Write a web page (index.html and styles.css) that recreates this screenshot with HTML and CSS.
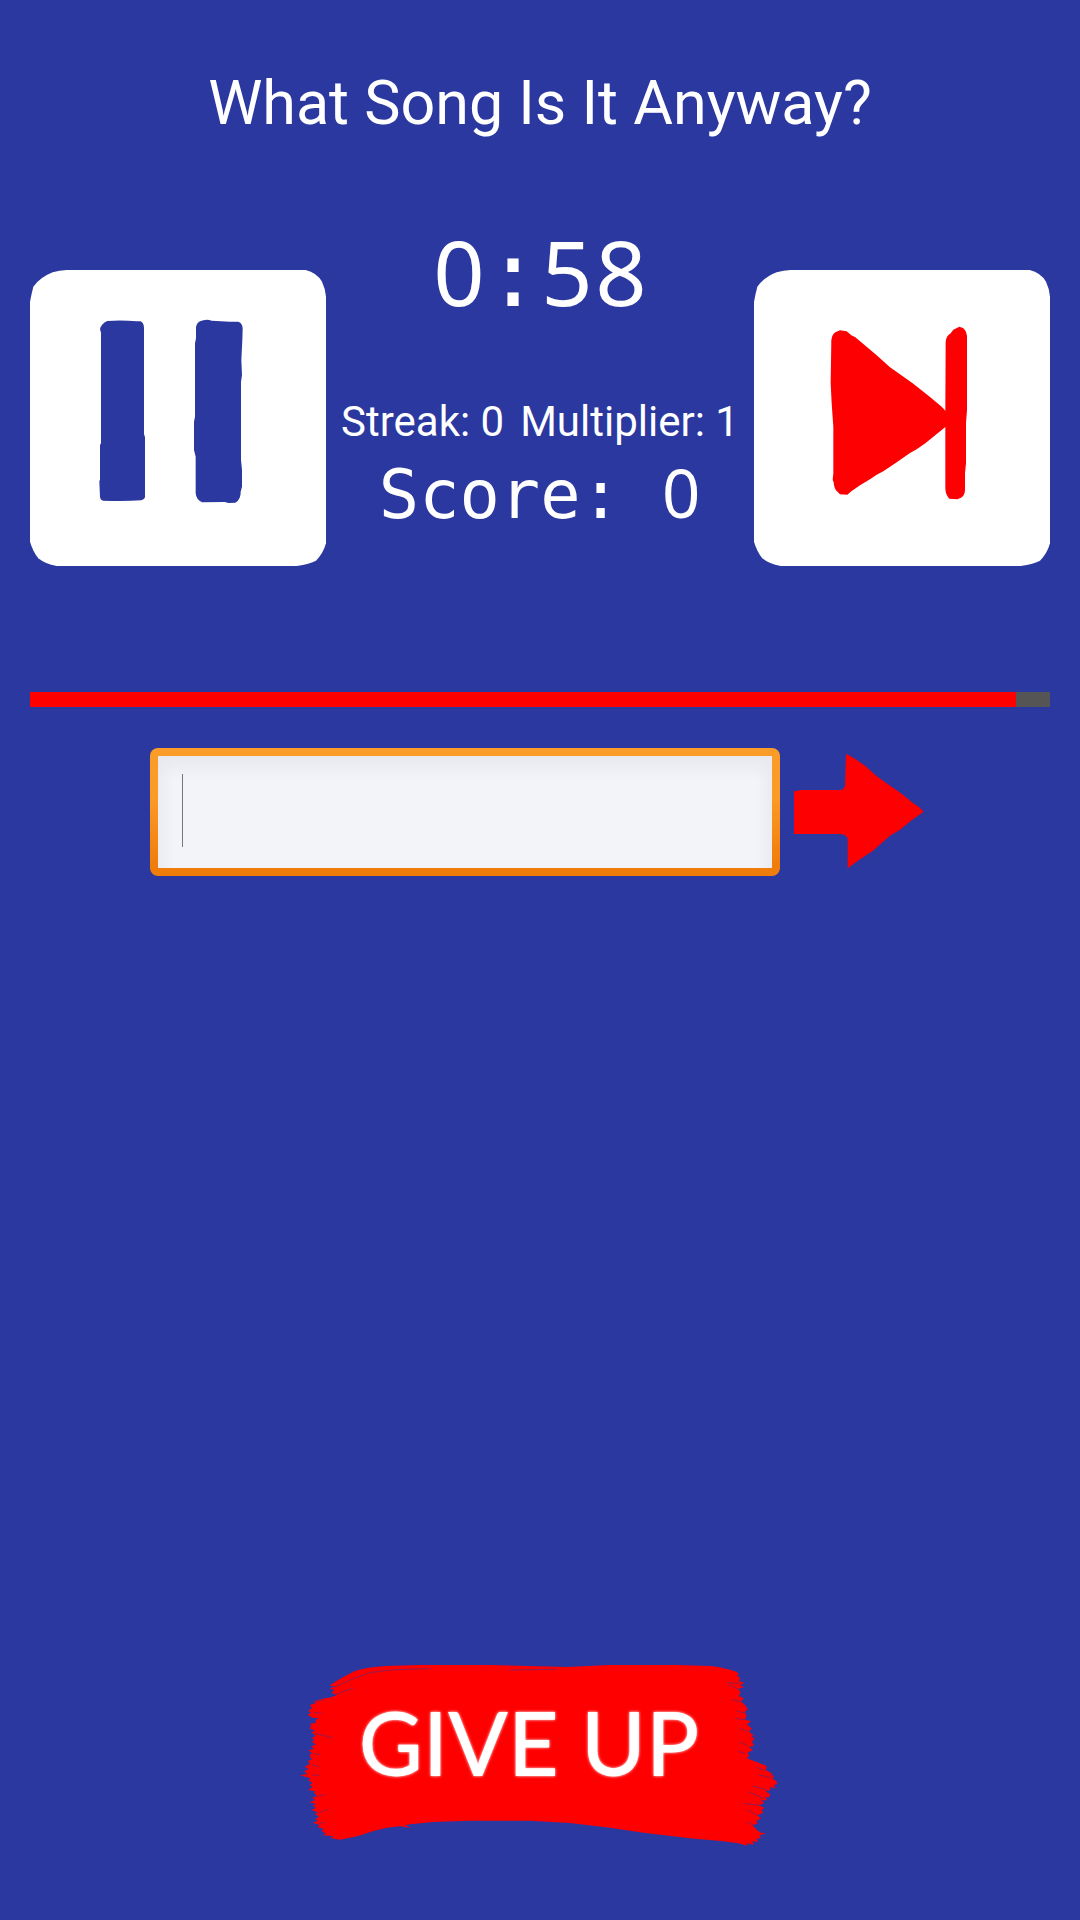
FILE: index.html
```html
<!DOCTYPE html>
<html lang="en">
<head>
<meta charset="utf-8">
<meta name="viewport" content="width=device-width, initial-scale=1">
<title>What Song Is It Anyway?</title>
<link rel="stylesheet" href="styles.css">
</head>
<body>
<main class="game">
  <h1 class="title">What Song Is It Anyway?</h1>

  <section class="controls">
    <button class="tile" type="button" aria-label="Pause">
      <svg class="art" viewBox="30 30 888 888" aria-hidden="true">
        <path fill="#fff" d="M140 30H857Q890 38 906 65Q917 88 918 110V850Q910 880 888 902Q870 912 830 918H110Q75 912 55 895Q38 873 30 845V125Q34 103 40 80Q60 52 98 37Q118 31 140 30Z"/>
        <path fill="#2a38a0" d="M262 183Q305 180 350 184H362Q371 188 372 203V522L375 532V712Q374 718 364 721Q310 725 250 722Q241 720 240 711L238 663L240 660V555L243 550V218L240 208Q243 191 262 183Z"/>
        <path fill="#2a38a0" d="M540 184Q558 176 575 182L630 185H655Q668 189 668 208L667 240L664 300L666 345L663 365V600L666 630V680L662 695Q663 718 646 728L625 729L615 726L546 727Q529 720 527 700V590L522 570V485L525 470V250L528 235V202Q530 189 540 184Z"/>
      </svg>
    </button>

    <div class="stats">
      <div class="timer" role="timer"><span class="digit">0</span>:<span class="digit">5</span><span class="digit">8</span></div>
      <div class="bonus"><span>Streak: 0</span><span>Multiplier: 1</span></div>
      <div class="score">Score: <span class="digit">0</span></div>
    </div>

    <button class="tile" type="button" aria-label="Skip song">
      <svg class="art" viewBox="42 30 888 888" aria-hidden="true">
        <path fill="#fff" d="M152 30H869Q902 38 918 65Q929 88 930 110V850Q922 880 900 902Q882 912 842 918H122Q87 912 67 895Q50 873 42 845V125Q46 103 52 80Q72 52 110 37Q130 31 152 30Z"/>
        <path fill="#fd0002" d="M286 217L300 211L320 214L334 226L346 232L410 286L450 322L518 370L570 411L605 440L616 452L617 245Q619 227 632 220L640 209L652 203L658 200L669 204Q679 212 681 228V450L678 490V610L675 640V690Q674 707 663 713L652 718L628 716Q617 706 616 685V501L605 510L556 550L530 568L510 579L468 608L430 634L410 644L390 658L360 676L334 694L322 704L300 703L291 694Q282 686 281 667L278 660L280 640V500L275 430L272 370L274 240Q276 224 286 217Z"/>
      </svg>
    </button>
  </section>

  <progress class="time-left" max="60" value="58" aria-label="Time left"></progress>

  <form class="guess">
    <input class="guess-box" type="text" aria-label="Song title" autocomplete="off">
    <button class="send" type="button" aria-label="Submit guess">
      <svg class="art" viewBox="240 204 450 384" aria-hidden="true">
        <path fill="#fc0002" d="M282 334L305 330H422Q433 328 435 316L438 221L465 236L497 259L525 284L550 303L607 343L640 370L658 382L671 395L632 423L600 449L570 467L518 513L480 538L443 565V474L434 465L422 462H282Z"/>
      </svg>
    </button>
  </form>

  <button class="give-up" type="button">
    <svg class="brush" viewBox="0 0 1500 630" aria-hidden="true">
      <path fill="#f00" d="M124 103L160 81L195 63Q230 51 290 48L390 45H600L830 51L960 45H1160L1260 48Q1310 54 1338 65L1348 72L1340 76L1350 83L1347 94L1363 98L1350 106L1362 112L1344 117L1352 126L1346 138L1362 145L1352 154L1366 166L1373 178L1364 186L1370 197L1364 209L1384 214L1370 223L1386 236L1376 244L1390 256L1382 265L1396 262L1386 275L1392 287L1376 291L1389 300L1372 308L1378 317L1370 325L1402 337L1430 348L1428 360L1448 372L1442 379L1452 376L1448 387L1458 392L1462 403L1452 404L1456 416L1442 410L1440 421L1426 424L1440 432L1437 443L1424 440L1432 451L1415 451L1422 460L1406 466L1424 474L1414 480L1420 488L1402 496L1414 506L1398 512L1404 520L1388 526L1400 539L1412 548L1428 550L1408 556L1413 564L1400 566L1404 577L1388 573L1390 584L1370 580L1372 587L1345 580L1300 574L1200 565L1060 548L960 533L840 519L720 512H540L430 516L360 523L345 526L364 534L330 529L290 533L248 544L205 558L150 569L120 564L132 559L98 556L108 551L94 542L102 537L82 531L90 525L68 518L84 513L76 507L88 500L74 492L84 487L64 480L78 474L68 466L80 462L58 457L77 450L66 444L80 437L72 428L76 424L54 420L68 411L58 405L68 400L55 391L62 385L46 380L30 376L52 372L42 363L56 358L44 350L60 342L54 333L66 328L58 316L66 310L55 301L72 297L64 289L78 283L66 276L73 268L64 263L78 258L64 247L76 242L58 235L64 228L60 221L78 218L76 210L87 205L68 203L52 194L64 188L54 183L66 175L60 164L78 160L72 154L94 147L124 142L140 135L124 128L134 119L118 116L136 109L120 108Z"/>
      <g fill="none" stroke="#2a38a0" stroke-width="3" opacity=".5">
        <path d="M132 112L185 88L240 68L300 60L420 56M130 137L165 122L190 116M76 154L102 149M74 250L104 257L128 264M72 188L95 190M70 310L92 314M66 344L86 350M67 375L88 376M72 440L105 434M86 490L112 478M88 520L108 516M660 60L800 58"/>
        <path d="M1348 100L1310 98M1344 117L1315 104M1350 154L1325 149M1362 188L1340 184M1364 209L1335 205M1372 244L1350 235M1370 285L1348 276M1366 310L1344 304M1428 362L1400 352M1444 384L1405 374M1432 420L1388 408M1420 445L1375 425M1410 466L1360 460M1403 496L1370 479M1390 525L1368 515"/>
      </g>
    </svg>
    <span class="give-up-text">GIVE UP</span>
  </button>
</main>
</body>
</html>
```
FILE: styles.css
```css
* {
  box-sizing: border-box;
}

body {
  margin: 0;
  background: #2a38a0;
  color: #fff;
  font-family: Roboto, "Liberation Sans", sans-serif;
}

button {
  padding: 0;
  border: 0;
  background: none;
  color: inherit;
  cursor: pointer;
}

.game {
  display: flex;
  flex-direction: column;
  min-height: 100vh;
  padding: 60px 30px;
}

.title {
  margin: 0;
  font-size: 61px;
  font-weight: 400;
  line-height: 86px;
  text-align: center;
}

.controls {
  display: flex;
  align-items: flex-end;
  justify-content: space-between;
  margin-top: 75px;
}

.tile {
  flex: none;
  width: 296px;
  height: 296px;
}

.art {
  display: block;
  width: 100%;
  height: 100%;
}

.stats {
  display: flex;
  flex-direction: column;
  align-items: center;
  height: 345px;
}

.timer,
.score {
  font-family: "DejaVu Sans Mono", monospace;
  white-space: pre;
}

.timer {
  font-size: 90px;
  line-height: 108px;
}

.score {
  margin-top: 8px;
  font-size: 67px;
  line-height: 80px;
}

.digit {
  display: inline-block;
  font-family: "Noto Sans", sans-serif;
  line-height: 1;
  text-align: center;
}

.timer .digit {
  width: 54px;
}

.score .digit {
  width: 40px;
}

.bonus {
  display: flex;
  gap: 16px;
  margin-top: 68px;
  font-size: 42px;
  line-height: 50px;
}

.time-left {
  appearance: none;
  display: block;
  width: 100%;
  height: 15px;
  margin-top: 126px;
  border: 0;
  background: #555;
}

.time-left::-webkit-progress-bar {
  background: #555;
}

.time-left::-webkit-progress-value {
  background: #f00;
}

.guess {
  display: flex;
  margin: 41px 120px 0;
}

.guess-box {
  flex: 1;
  min-width: 0;
  height: 128px;
  padding: 0 32px;
  border: 8px solid transparent;
  border-radius: 8px;
  outline: 0;
  background:
    linear-gradient(#777, #777) 24px 18px / 1px 73px no-repeat padding-box,
    linear-gradient(#e8e9ee, transparent 24px) padding-box,
    linear-gradient(90deg, #eaecf1, transparent 16px calc(100% - 16px), #eaecf1) padding-box,
    linear-gradient(#f3f4fa, #f3f4fa) padding-box,
    linear-gradient(#fc9c28 36%, #f07c0a 92%) border-box;
  color: #222;
  font: 54px Roboto, sans-serif;
}

.send {
  flex: none;
  width: 150px;
  height: 128px;
}

.give-up {
  display: grid;
  align-self: center;
  width: 500px;
  margin-top: auto;
}

.brush,
.give-up-text {
  grid-area: 1 / 1;
}

.brush {
  display: block;
  width: 100%;
}

.give-up-text {
  padding: 40px 22px 0 0;
  font: 500 88px/104px Lato, sans-serif;
  text-shadow: 0 0 3px #fff;
}
```
